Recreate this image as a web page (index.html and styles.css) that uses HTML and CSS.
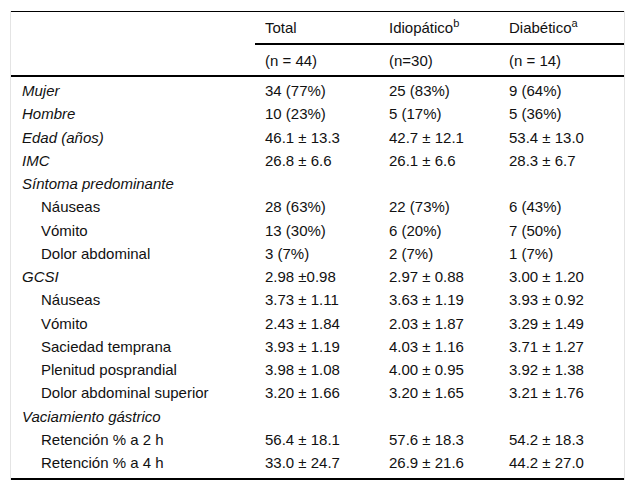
FILE: index.html
```html
<!DOCTYPE html>
<html lang="es">
<head>
<meta charset="utf-8">
<title>Tabla</title>
<link rel="stylesheet" href="styles.css">
</head>
<body>
<div class="wrap">
<table class="data">
  <colgroup>
    <col class="c-label">
    <col class="c-total">
    <col class="c-idio">
    <col class="c-diab">
  </colgroup>
  <thead>
    <tr class="h1">
      <th class="blank"></th>
      <th>Total</th>
      <th>Idiopático<sup>b</sup></th>
      <th>Diabético<sup>a</sup></th>
    </tr>
    <tr class="h2">
      <th class="blank"></th>
      <th>(n = 44)</th>
      <th>(n=30)</th>
      <th>(n = 14)</th>
    </tr>
  </thead>
  <tbody>
    <tr class="first"><td class="lab it">Mujer</td><td>34 (77%)</td><td>25 (83%)</td><td>9 (64%)</td></tr>
    <tr><td class="lab it">Hombre</td><td>10 (23%)</td><td>5 (17%)</td><td>5 (36%)</td></tr>
    <tr><td class="lab it">Edad (años)</td><td>46.1 ± 13.3</td><td>42.7 ± 12.1</td><td>53.4 ± 13.0</td></tr>
    <tr><td class="lab it">IMC</td><td>26.8 ± 6.6</td><td>26.1 ± 6.6</td><td>28.3 ± 6.7</td></tr>
    <tr><td class="lab it">Síntoma predominante</td><td></td><td></td><td></td></tr>
    <tr><td class="lab sub">Náuseas</td><td>28 (63%)</td><td>22 (73%)</td><td>6 (43%)</td></tr>
    <tr><td class="lab sub">Vómito</td><td>13 (30%)</td><td>6 (20%)</td><td>7 (50%)</td></tr>
    <tr><td class="lab sub">Dolor abdominal</td><td>3 (7%)</td><td>2 (7%)</td><td>1 (7%)</td></tr>
    <tr><td class="lab it">GCSI</td><td>2.98 ±0.98</td><td>2.97 ± 0.88</td><td>3.00 ± 1.20</td></tr>
    <tr><td class="lab sub">Náuseas</td><td>3.73 ± 1.11</td><td>3.63 ± 1.19</td><td>3.93 ± 0.92</td></tr>
    <tr><td class="lab sub">Vómito</td><td>2.43 ± 1.84</td><td>2.03 ± 1.87</td><td>3.29 ± 1.49</td></tr>
    <tr><td class="lab sub">Saciedad temprana</td><td>3.93 ± 1.19</td><td>4.03 ± 1.16</td><td>3.71 ± 1.27</td></tr>
    <tr><td class="lab sub">Plenitud posprandial</td><td>3.98 ± 1.08</td><td>4.00 ± 0.95</td><td>3.92 ± 1.38</td></tr>
    <tr><td class="lab sub">Dolor abdominal superior</td><td>3.20 ± 1.66</td><td>3.20 ± 1.65</td><td>3.21 ± 1.76</td></tr>
    <tr><td class="lab it">Vaciamiento gástrico</td><td></td><td></td><td></td></tr>
    <tr><td class="lab sub">Retención % a 2 h</td><td>56.4 ± 18.1</td><td>57.6 ± 18.3</td><td>54.2 ± 18.3</td></tr>
    <tr class="last"><td class="lab sub">Retención % a 4 h</td><td>33.0 ± 24.7</td><td>26.9 ± 21.6</td><td>44.2 ± 27.0</td></tr>
  </tbody>
</table>
</div>
</body>
</html>
```
FILE: styles.css
```css
html, body {
  margin: 0;
  padding: 0;
  background: #fff;
}
body {
  font-family: "Liberation Sans", Arial, sans-serif;
  font-size: 15px;
  color: #111;
}
.wrap {
  margin: 11px 0 0 10px;
  width: 613px;
  border-left: 1px solid #e4e4e4;
  border-right: 1px solid #e4e4e4;
}
.data {
  width: 613px;
  table-layout: fixed;
  border-collapse: separate;
  border-spacing: 0;
  border-top: 1px solid #000;
  border-bottom: 2px solid #000;
}
.c-label { width: 244px; }
.c-total { width: 124px; }
.c-idio { width: 120px; }
.c-diab { width: 125px; }
th {
  font-weight: normal;
  text-align: left;
  padding: 0 0 0 10px;
  white-space: nowrap;
}
.h1 th {
  height: 31px;
  border-bottom: 2px solid #000;
}
.h1 th.blank {
  border-bottom: none;
  height: 33px;
}
.h2 th {
  height: 30px;
  border-bottom: 2px solid #000;
}
sup {
  font-size: 11px;
  line-height: 0;
  vertical-align: 6px;
}
td {
  padding: 2px 0 2px 10px;
  line-height: 19.25px;
  white-space: nowrap;
}
td.lab { padding-left: 11px; }
td.it { font-style: italic; }
td.sub { padding-left: 30px; }
tr.first td { padding-top: 4px; }
tr.last td { padding-bottom: 5.75px; }
```
